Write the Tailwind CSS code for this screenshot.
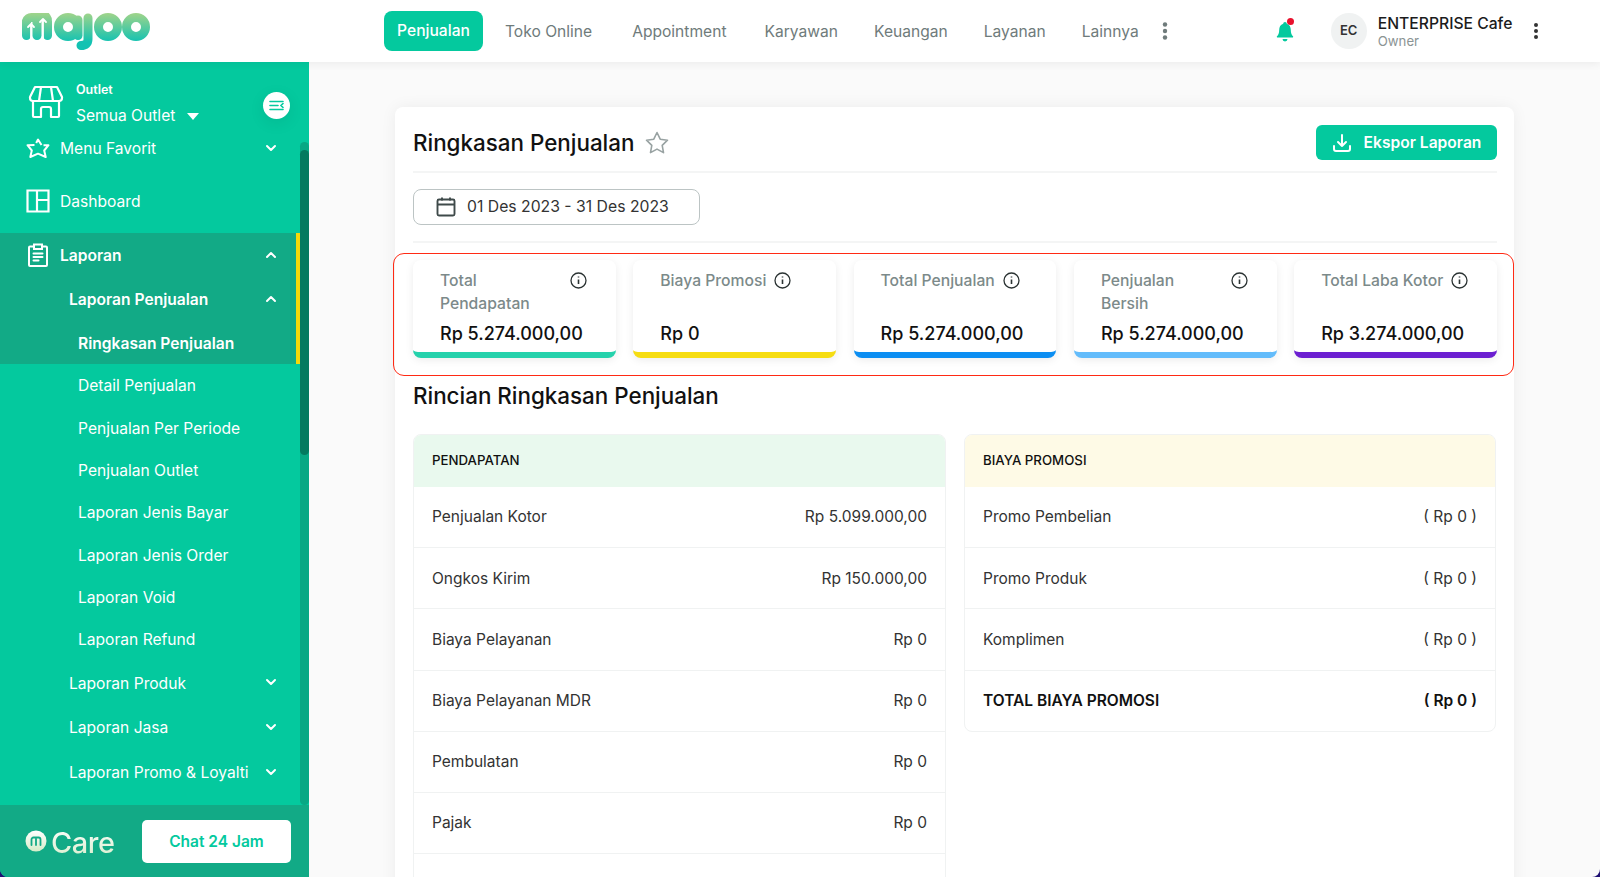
<!DOCTYPE html>
<html lang="en">
  <head>
    <meta charset="UTF-8" />
    <meta name="viewport" content="width=device-width, initial-scale=1.0" />
    <title>Ringkasan Penjualan</title>
    <script src="https://cdn.jsdelivr.net/npm/@tailwindcss/browser@4"></script>
  </head>
  <body class="h-[877px] w-[1600px] overflow-hidden bg-[#1e0f73] font-[Inter,sans-serif]">
    <!-- Top bar -->
    <header class="relative z-10 flex h-[62px] items-center bg-white shadow-[0_2px_8px_rgba(0,0,0,0.06)]">
      <div class="w-[384px] shrink-0 pl-[20px]">
        <svg width="132" height="42" viewBox="20 10 132 42" fill="none" aria-label="majoo">
          <defs>
            <linearGradient id="logoGrad" gradientUnits="userSpaceOnUse" x1="0" y1="13" x2="0" y2="42">
              <stop offset="0" stop-color="#a0d48a" />
              <stop offset="1" stop-color="#12c2b2" />
            </linearGradient>
          </defs>
          <g stroke="url(#logoGrad)" stroke-width="9" stroke-linecap="round">
            <path d="M26.500 35.500V21a5 5 0 0 1 5-3.500h15a5 5 0 0 1 1 3.500V35.500" />
            <path d="M37 22V35.500" />
            <circle cx="68" cy="27" r="9.500" />
            <path d="M78 20V35.500" />
            <path d="M88 18V39Q88 45.500 81 45.500" />
            <circle cx="108" cy="27" r="9.500" />
            <circle cx="136" cy="27" r="9.500" />
          </g>
          <g stroke="#fff" stroke-width="1.800" stroke-linecap="round" stroke-linejoin="round">
            <path d="M31 38V24M28 27l3-3 3 3" />
            <path d="M43 38V19M40 22l3-3 3 3" />
          </g>
        </svg>
      </div>
      <nav class="flex items-center text-[15.600px] text-[#6f7b7b]">
        <a class="flex h-[40px] w-[99px] items-center justify-center rounded-[8px] bg-[#04c99e] font-medium text-white">Penjualan</a>
        <a class="ml-[22px] pt-[2px]">Toko Online</a>
        <a class="ml-[40px] pt-[2px]">Appointment</a>
        <a class="ml-[38px] pt-[2px]">Karyawan</a>
        <a class="ml-[36px] pt-[2px]">Keuangan</a>
        <a class="ml-[36px] pt-[2px]">Layanan</a>
        <a class="ml-[36px] pt-[2px]">Lainnya</a>
        <svg class="ml-[20px]" width="12" height="20" viewBox="0 0 12 20" fill="#6f7b7b">
          <circle cx="6" cy="3.500" r="2.200" /><circle cx="6" cy="10" r="2.200" /><circle cx="6" cy="16.500" r="2.200" />
        </svg>
      </nav>
      <div class="relative ml-[105px] h-[24px] w-[22px]">
        <svg class="mt-[2px]" width="18" height="22" viewBox="0 0 18 22" fill="#04c99e">
          <path d="M9 1a1.800 1.800 0 0 1 1.800 1.800c2.800.9 4 3.300 4 6.200 0 3 .8 5 2.200 6.200.4.400.2 1.300-.6 1.300H1.600c-.8 0-1-.9-.6-1.300C2.400 14 3.200 12 3.200 9c0-2.900 1.200-5.300 4-6.200A1.800 1.800 0 0 1 9 1Z" />
          <path d="M6.500 18h5a2.500 2.500 0 0 1-5 0Z" />
        </svg>
        <span class="absolute left-[11px] top-[-1px] h-[7px] w-[7px] rounded-full bg-[#e8112d]"></span>
      </div>
      <div class="ml-[33px] flex h-[36px] w-[36px] items-center justify-center rounded-full bg-[#f0f2f2] text-[13px] font-semibold text-[#333]">EC</div>
      <div class="ml-[11px] flex w-[145px] flex-col">
        <span class="text-[15.700px] leading-[20px] font-medium text-[#1c1c1c]">ENTERPRISE Cafe</span>
        <span class="text-[13.200px] leading-[14px] text-[#8b9494]">Owner</span>
      </div>
      <svg class="ml-[7px]" width="12" height="18" viewBox="0 0 12 18" fill="#333">
        <circle cx="6" cy="3" r="2" /><circle cx="6" cy="9" r="2" /><circle cx="6" cy="15" r="2" />
      </svg>
    </header>

    <div class="flex h-[815px]">
      <!-- Sidebar -->
      <aside class="relative flex w-[309px] shrink-0 flex-col overflow-hidden rounded-bl-[8px] bg-[#04c99e] text-white">
        <div class="flex h-[60px] w-[300px] pl-[28px] pt-[18px]">
          <svg class="mt-[5px]" width="36" height="34" viewBox="0 0 36 34" fill="none" stroke="#fff" stroke-width="2.200" stroke-linejoin="round" stroke-linecap="round">
            <path d="M7 2h22l5 10v1a3 3 0 0 1-3 3H5a3 3 0 0 1-3-3v-1L7 2Z" />
            <path d="M13 2l-2 14M23 2l2 14" />
            <path d="M5 16v15a1 1 0 0 0 1 1h7V24a2 2 0 0 1 2-2h6a2 2 0 0 1 2 2v8h7a1 1 0 0 0 1-1V16" />
          </svg>
          <div class="ml-[12px] flex flex-col">
            <span class="text-[12.500px] leading-[20px] font-semibold">Outlet</span>
            <span class="mt-[6px] flex items-center text-[15.600px] leading-[20px]">Semua Outlet
              <svg class="ml-[12px]" width="12" height="7" viewBox="0 0 12 7" fill="#fff"><path d="M0 0h12L6 7Z" /></svg>
            </span>
          </div>
        </div>

        <nav class="flex w-[300px] flex-1 flex-col text-[15.600px]">
          <a class="flex h-[52px] shrink-0 items-center pl-[26px] pr-[23px]">
            <svg width="24" height="22" viewBox="0 0 24 22" fill="none" stroke="#fff" stroke-width="2" stroke-linejoin="round"><path d="M8.500 8 1.500 8.200l4.300 5.300-1.500 6.500 7.700-3.300 7.700 3.300-1.500-6.500 4.300-5.300-5 0M15.500 8 12 2.500 10.200 6" /></svg>
            <span class="ml-[10px] flex-1 pt-[2px]">Menu Favorit</span>
            <svg width="12" height="8" viewBox="0 0 12 8" fill="none" stroke="#fff" stroke-width="2" stroke-linecap="round" stroke-linejoin="round"><path d="m2 2 4 4 4-4" /></svg>
          </a>
          <a class="flex h-[53px] shrink-0 items-center pl-[26px] pr-[23px]">
            <svg width="24" height="24" viewBox="0 0 24 24" fill="none" stroke="#fff" stroke-width="2.200"><path d="M1.500 1.500h21v21h-21zM11 1.500v21M11 11h11.500" /></svg>
            <span class="ml-[10px] flex-1 pt-[2px]">Dashboard</span>
          </a>
          <div class="mt-[6px] shrink-0 border-r-4 border-[#f5d90a] bg-[#12aa86]">
            <a class="flex h-[44px] items-center pl-[27px] pr-[19px] font-semibold">
              <svg width="22" height="24" viewBox="0 0 22 24" fill="none" stroke="#fff" stroke-width="2" stroke-linecap="round"><path d="M7 3.500H3a1 1 0 0 0-1 1V22a1 1 0 0 0 1 1h16a1 1 0 0 0 1-1V4.500a1 1 0 0 0-1-1h-4" /><path d="M7 1.500h8V6H7zM6.500 10.500h9M6.500 14h9M6.500 17.500h5" /></svg>
              <span class="ml-[11px] flex-1 pt-[2px]">Laporan</span>
              <svg width="12" height="8" viewBox="0 0 12 8" fill="none" stroke="#fff" stroke-width="2" stroke-linecap="round" stroke-linejoin="round"><path d="m2 6 4-4 4 4" /></svg>
            </a>
            <a class="flex h-[44px] items-center pl-[69px] pr-[19px] font-semibold">
              <span class="flex-1 pt-[2px]">Laporan Penjualan</span>
              <svg width="12" height="8" viewBox="0 0 12 8" fill="none" stroke="#fff" stroke-width="2" stroke-linecap="round" stroke-linejoin="round"><path d="m2 6 4-4 4 4" /></svg>
            </a>
            <a class="flex h-[43px] items-center pl-[78px] pt-[2px] font-semibold">Ringkasan Penjualan</a>
          </div>
          <a class="flex h-[42.300px] shrink-0 items-center pl-[78px] pt-[2px]">Detail Penjualan</a>
          <a class="flex h-[42.300px] shrink-0 items-center pl-[78px] pt-[2px]">Penjualan Per Periode</a>
          <a class="flex h-[42.300px] shrink-0 items-center pl-[78px] pt-[2px]">Penjualan Outlet</a>
          <a class="flex h-[42.300px] shrink-0 items-center pl-[78px] pt-[2px]">Laporan Jenis Bayar</a>
          <a class="flex h-[42.300px] shrink-0 items-center pl-[78px] pt-[2px]">Laporan Jenis Order</a>
          <a class="flex h-[42.300px] shrink-0 items-center pl-[78px] pt-[2px]">Laporan Void</a>
          <a class="flex h-[42.300px] shrink-0 items-center pl-[78px] pt-[2px]">Laporan Refund</a>
          <a class="flex h-[44.500px] shrink-0 items-center pl-[69px] pr-[23px]">
            <span class="flex-1 pt-[2px]">Laporan Produk</span>
            <svg width="12" height="8" viewBox="0 0 12 8" fill="none" stroke="#fff" stroke-width="2" stroke-linecap="round" stroke-linejoin="round"><path d="m2 2 4 4 4-4" /></svg>
          </a>
          <a class="flex h-[45px] shrink-0 items-center pl-[69px] pr-[23px]">
            <span class="flex-1 pt-[2px]">Laporan Jasa</span>
            <svg width="12" height="8" viewBox="0 0 12 8" fill="none" stroke="#fff" stroke-width="2" stroke-linecap="round" stroke-linejoin="round"><path d="m2 2 4 4 4-4" /></svg>
          </a>
          <a class="flex h-[44px] shrink-0 items-center pl-[69px] pr-[23px]">
            <span class="flex-1 pt-[2px]">Laporan Promo &amp; Loyalti</span>
            <svg width="12" height="8" viewBox="0 0 12 8" fill="none" stroke="#fff" stroke-width="2" stroke-linecap="round" stroke-linejoin="round"><path d="m2 2 4 4 4-4" /></svg>
          </a>
        </nav>

        <div class="flex h-[72px] shrink-0 items-center bg-[#12aa86] pl-[25px]">
          <svg width="22" height="22" viewBox="0 0 22 22">
            <defs>
              <linearGradient id="careGrad" x1="0" y1="0" x2="0" y2="1">
                <stop offset="0" stop-color="#ffffff" />
                <stop offset="1" stop-color="#d5ecc8" />
              </linearGradient>
            </defs>
            <circle cx="11" cy="11" r="10.500" fill="url(#careGrad)" />
            <path d="M6.500 15V9.500a2 2 0 0 1 2-2h5a2 2 0 0 1 2 2V15M11 9v6" fill="none" stroke="#12aa86" stroke-width="1.800" stroke-linecap="round" />
          </svg>
          <span class="ml-[4px] mt-[3px] w-[91px] bg-linear-to-b from-white to-[#d5ecc8] bg-clip-text text-[29px] leading-[38px] font-medium tracking-[-0.5px] text-transparent">Care</span>
          <a class="flex h-[43px] w-[149px] items-center justify-center rounded-[5px] bg-white pt-[2px] text-[15.500px] font-semibold text-[#04c99e]">Chat 24 Jam</a>
        </div>

        <!-- collapse button and scrollbar lie over the menu -->
        <button class="absolute left-[263px] top-[30px] flex h-[27px] w-[27px] items-center justify-center rounded-full bg-white shadow-[0_4px_16px_rgba(0,0,0,0.08)]">
          <svg width="15" height="11" viewBox="0 0 15 11" fill="none" stroke="#04c99e" stroke-width="1.600" stroke-linecap="round"><path d="M1 1.500h13M1 9.500h13M1 5.500h8M14 3.500l-2 2 2 2" /></svg>
        </button>
        <div class="absolute left-[300px] top-[80px] h-[663px] w-[9px] rounded-full bg-[#08a884]">
          <div class="mt-[8px] h-[305px] w-[9px] rounded-full bg-[#047a5f]"></div>
        </div>
      </aside>

      <!-- Main content -->
      <main class="flex-1 overflow-hidden rounded-br-[8px] bg-[#fafafa] pl-[86px] pt-[45px]">
        <section class="w-[1119px] rounded-t-[8px] bg-white pl-[18px] pr-[17px] shadow-[0_0_16px_rgba(0,0,0,0.06)]">
          <div class="flex h-[66px] items-center justify-between border-b-2 border-[#f4f5f5] pt-[7px]">
            <div class="flex items-center">
              <h1 class="text-[22.400px] font-medium text-[#111]">Ringkasan Penjualan</h1>
              <svg class="ml-[11px]" width="24" height="23" viewBox="0 0 24 23" fill="none" stroke="#98a2a2" stroke-width="1.600" stroke-linejoin="round"><path d="m12 1.500 3.200 6.700 7.300 1-5.300 5.100 1.300 7.300-6.500-3.500-6.500 3.500 1.300-7.300L1.500 9.200l7.300-1L12 1.500Z" /></svg>
            </div>
            <button class="flex h-[35px] w-[181px] items-center justify-center rounded-[6px] bg-[#04c99e] text-[15.600px] font-semibold text-white">
              <svg class="mr-[12px]" width="20" height="20" viewBox="0 0 20 20" fill="none" stroke="#fff" stroke-width="2" stroke-linecap="round" stroke-linejoin="round"><path d="M10 2v11M6 9l4 4 4-4M2 13v3a2 2 0 0 0 2 2h12a2 2 0 0 0 2-2v-3" /></svg>
              Ekspor Laporan
            </button>
          </div>

          <div class="flex h-[70px] items-center border-b-2 border-[#f4f5f5]">
            <div class="flex h-[36px] w-[287px] items-center rounded-[8px] border border-[#bcc4c4] pl-[21px] text-[15.750px] text-[#333]">
              <svg width="22" height="22" viewBox="0 0 22 22" fill="none" stroke="#3f4a4a" stroke-width="1.900"><rect x="2.500" y="3.500" width="17" height="16" rx="1.500" /><path d="M2.500 8.500h17M7 1.500v3M15 1.500v3" /></svg>
              <span class="ml-[10px]">01 Des 2023 - 31 Des 2023</span>
            </div>
          </div>

          <!-- Stat cards, with the red annotation frame on top -->
          <div class="relative mt-[17px] grid grid-cols-5 gap-[17.500px]">
            <div class="flex h-[98px] flex-col justify-between overflow-hidden rounded-[8px] border-b-[6px] border-[#25d2ac] bg-white pl-[27px] pt-[9px] shadow-[0_2px_8px_rgba(0,0,0,0.08)]">
              <div class="flex items-start text-[15.700px] leading-[23px] font-medium text-[#7c8a8a]">
                <span class="w-[122px]">Total Pendapatan</span>
                <svg class="ml-[8px] mt-[3px]" width="17" height="17" viewBox="0 0 17 17" fill="none" stroke="#2b3333" stroke-width="1.300"><circle cx="8.500" cy="8.500" r="7.500" /><path d="M8.500 7.500v4.500M8.500 4.500v1" stroke-width="1.600" /></svg>
              </div>
              <div class="pb-[6px] text-[18px] leading-[24px] font-medium text-[#111]">Rp 5.274.000,00</div>
            </div>
            <div class="flex h-[98px] flex-col justify-between overflow-hidden rounded-[8px] border-b-[6px] border-[#f6dd12] bg-white pl-[27px] pt-[9px] shadow-[0_2px_8px_rgba(0,0,0,0.08)]">
              <div class="flex items-start text-[15.700px] leading-[23px] font-medium text-[#7c8a8a]">
                <span>Biaya Promosi</span>
                <svg class="ml-[8px] mt-[3px]" width="17" height="17" viewBox="0 0 17 17" fill="none" stroke="#2b3333" stroke-width="1.300"><circle cx="8.500" cy="8.500" r="7.500" /><path d="M8.500 7.500v4.500M8.500 4.500v1" stroke-width="1.600" /></svg>
              </div>
              <div class="pb-[6px] text-[18px] leading-[24px] font-medium text-[#111]">Rp 0</div>
            </div>
            <div class="flex h-[98px] flex-col justify-between overflow-hidden rounded-[8px] border-b-[6px] border-[#0c8ef2] bg-white pl-[27px] pt-[9px] shadow-[0_2px_8px_rgba(0,0,0,0.08)]">
              <div class="flex items-start text-[15.700px] leading-[23px] font-medium text-[#7c8a8a]">
                <span>Total Penjualan</span>
                <svg class="ml-[8px] mt-[3px]" width="17" height="17" viewBox="0 0 17 17" fill="none" stroke="#2b3333" stroke-width="1.300"><circle cx="8.500" cy="8.500" r="7.500" /><path d="M8.500 7.500v4.500M8.500 4.500v1" stroke-width="1.600" /></svg>
              </div>
              <div class="pb-[6px] text-[18px] leading-[24px] font-medium text-[#111]">Rp 5.274.000,00</div>
            </div>
            <div class="flex h-[98px] flex-col justify-between overflow-hidden rounded-[8px] border-b-[6px] border-[#63bcfb] bg-white pl-[27px] pt-[9px] shadow-[0_2px_8px_rgba(0,0,0,0.08)]">
              <div class="flex items-start text-[15.700px] leading-[23px] font-medium text-[#7c8a8a]">
                <span class="w-[122px]">Penjualan Bersih</span>
                <svg class="ml-[8px] mt-[3px]" width="17" height="17" viewBox="0 0 17 17" fill="none" stroke="#2b3333" stroke-width="1.300"><circle cx="8.500" cy="8.500" r="7.500" /><path d="M8.500 7.500v4.500M8.500 4.500v1" stroke-width="1.600" /></svg>
              </div>
              <div class="pb-[6px] text-[18px] leading-[24px] font-medium text-[#111]">Rp 5.274.000,00</div>
            </div>
            <div class="flex h-[98px] flex-col justify-between overflow-hidden rounded-[8px] border-b-[6px] border-[#6c1fd1] bg-white pl-[27px] pt-[9px] shadow-[0_2px_8px_rgba(0,0,0,0.08)]">
              <div class="flex items-start text-[15.700px] leading-[23px] font-medium text-[#7c8a8a]">
                <span class="whitespace-nowrap">Total Laba Kotor</span>
                <svg class="ml-[8px] mt-[3px]" width="17" height="17" viewBox="0 0 17 17" fill="none" stroke="#2b3333" stroke-width="1.300"><circle cx="8.500" cy="8.500" r="7.500" /><path d="M8.500 7.500v4.500M8.500 4.500v1" stroke-width="1.600" /></svg>
              </div>
              <div class="pb-[6px] text-[18px] leading-[24px] font-medium text-[#111]">Rp 3.274.000,00</div>
            </div>
            <div class="pointer-events-none absolute -left-[20px] -right-[17px] -top-[7px] h-[123px] rounded-[11px] border-[1.500px] border-[#ff2a14]"></div>
          </div>

          <h2 class="mt-[22px] text-[22.400px] leading-[32px] font-medium text-[#111]">Rincian Ringkasan Penjualan</h2>

          <div class="mt-[22px] flex items-start gap-[18px]">
            <div class="w-[533px] overflow-hidden rounded-[8px] border border-[#f0f2f2] text-[15.500px] text-[#333]">
              <div class="flex h-[52px] items-center bg-[#e9f9ee] pl-[18px] text-[13.250px] font-medium text-[#111]">PENDAPATAN</div>
              <div class="flex h-[61.200px] items-center justify-between border-b border-[#f0f2f2] px-[18px]"><span>Penjualan Kotor</span><span>Rp 5.099.000,00</span></div>
              <div class="flex h-[61.200px] items-center justify-between border-b border-[#f0f2f2] px-[18px]"><span>Ongkos Kirim</span><span>Rp 150.000,00</span></div>
              <div class="flex h-[61.200px] items-center justify-between border-b border-[#f0f2f2] px-[18px]"><span>Biaya Pelayanan</span><span>Rp 0</span></div>
              <div class="flex h-[61.200px] items-center justify-between border-b border-[#f0f2f2] px-[18px]"><span>Biaya Pelayanan MDR</span><span>Rp 0</span></div>
              <div class="flex h-[61.200px] items-center justify-between border-b border-[#f0f2f2] px-[18px]"><span>Pembulatan</span><span>Rp 0</span></div>
              <div class="flex h-[61.200px] items-center justify-between border-b border-[#f0f2f2] px-[18px]"><span>Pajak</span><span>Rp 0</span></div>
              <div class="h-[61px]"></div>
            </div>
            <div class="w-[532px] overflow-hidden rounded-[8px] border border-[#f0f2f2] text-[15.500px] text-[#333]">
              <div class="flex h-[52px] items-center bg-[#fefae6] pl-[18px] text-[13.250px] font-medium text-[#111]">BIAYA PROMOSI</div>
              <div class="flex h-[61.200px] items-center justify-between border-b border-[#f0f2f2] px-[18px]"><span>Promo Pembelian</span><span>( Rp 0 )</span></div>
              <div class="flex h-[61.200px] items-center justify-between border-b border-[#f0f2f2] px-[18px]"><span>Promo Produk</span><span>( Rp 0 )</span></div>
              <div class="flex h-[61.200px] items-center justify-between border-b border-[#f0f2f2] px-[18px]"><span>Komplimen</span><span>( Rp 0 )</span></div>
              <div class="flex h-[60px] items-center justify-between px-[18px] font-semibold text-[#111]"><span>TOTAL BIAYA PROMOSI</span><span>( Rp 0 )</span></div>
            </div>
          </div>
        </section>
      </main>
    </div>
  </body>
</html>
